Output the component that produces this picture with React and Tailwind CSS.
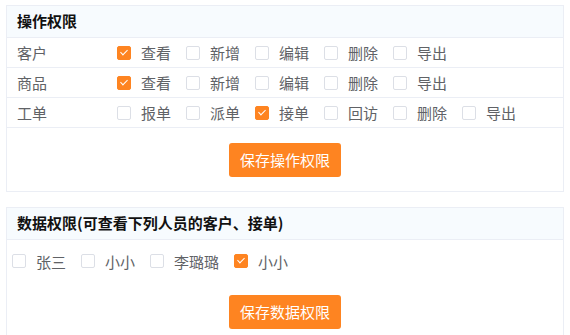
import React, { useState } from 'react';

const font = { fontFamily: '"Noto Sans CJK SC", "Noto Sans", sans-serif' };

function Check({ label, checked, onToggle }) {
  return (
    <label className="flex items-center mr-[15px] cursor-pointer select-none" onClick={onToggle}>
      <span
        className={
          'relative w-[14px] h-[14px] rounded-[2px] border ' +
          (checked ? 'bg-[#fe8421] border-[#fe8421]' : 'bg-white border-[#dcdfe6]')
        }
      >
        {checked && (
          <span className="absolute left-[4px] top-[1px] w-[4px] h-[7px] border-r border-b border-white rotate-45" />
        )}
      </span>
      <span className="ml-[10px] text-[15px] leading-none text-[#606266]">{label}</span>
    </label>
  );
}

const ops = [
  { name: '客户', items: ['查看', '新增', '编辑', '删除', '导出'], on: ['查看'] },
  { name: '商品', items: ['查看', '新增', '编辑', '删除', '导出'], on: ['查看'] },
  { name: '工单', items: ['报单', '派单', '接单', '回访', '删除', '导出'], on: ['接单'] },
];

export default function App() {
  const [opState, setOpState] = useState(
    ops.map((r) => r.items.map((i) => r.on.includes(i)))
  );
  const [people, setPeople] = useState([
    { name: '张三', on: false },
    { name: '小小', on: false },
    { name: '李璐璐', on: false },
    { name: '小小', on: true },
  ]);

  const toggleOp = (ri, ci) => (e) => {
    e.preventDefault();
    setOpState((s) => s.map((row, i) => (i === ri ? row.map((v, j) => (j === ci ? !v : v)) : row)));
  };

  return (
    <div className="w-[570px] h-[335px] overflow-hidden bg-white pt-[5px] pl-[6px] pr-[6px]" style={font}>
      {/* 操作权限 */}
      <div className="border border-[#ebeef5]">
        <div className="h-[32px] flex items-center px-[10px] bg-[#f7fbfe] border-b border-[#ebeef5] text-[15px] font-bold text-[#111]">
          操作权限
        </div>
        {ops.map((row, ri) => (
          <div key={ri} className="h-[30px] flex items-center px-[10px] border-b border-[#ebeef5]">
            <div className="w-[100px] text-[15px] leading-none text-[#606266]">{row.name}</div>
            {row.items.map((it, ci) => (
              <Check key={ci} label={it} checked={opState[ri][ci]} onToggle={toggleOp(ri, ci)} />
            ))}
          </div>
        ))}
        <div className="flex justify-center pt-[15px] pb-[14px]">
          <button className="w-[112px] h-[34px] rounded-[3px] bg-[#fe8421] text-white text-[15px]">
            保存操作权限
          </button>
        </div>
      </div>

      {/* 数据权限 */}
      <div className="mt-[15px] border border-[#ebeef5]">
        <div className="h-[32px] flex items-center px-[10px] bg-[#f7fbfe] border-b border-[#ebeef5] text-[15px] font-bold text-[#111]">
          数据权限(可查看下列人员的客户、接单)
        </div>
        <div className="h-[42px] flex items-center pl-[5px]">
          {people.map((p, i) => (
            <Check
              key={i}
              label={p.name}
              checked={p.on}
              onToggle={(e) => {
                e.preventDefault();
                setPeople((s) => s.map((x, j) => (j === i ? { ...x, on: !x.on } : x)));
              }}
            />
          ))}
        </div>
        <div className="flex justify-center pt-[13px] pb-[13px]">
          <button className="w-[112px] h-[34px] rounded-[3px] bg-[#fe8421] text-white text-[15px]">
            保存数据权限
          </button>
        </div>
      </div>
    </div>
  );
}
